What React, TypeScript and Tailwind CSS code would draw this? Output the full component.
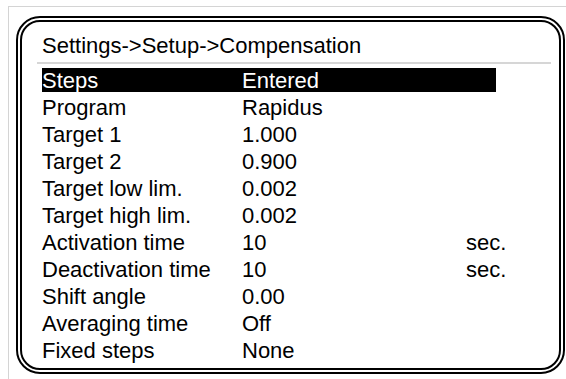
const rows = [
  { label: "Steps", value: "Entered", unit: "" },
  { label: "Program", value: "Rapidus", unit: "" },
  { label: "Target 1", value: "1.000", unit: "" },
  { label: "Target 2", value: "0.900", unit: "" },
  { label: "Target low lim.", value: "0.002", unit: "" },
  { label: "Target high lim.", value: "0.002", unit: "" },
  { label: "Activation time", value: "10", unit: "sec." },
  { label: "Deactivation time", value: "10", unit: "sec." },
  { label: "Shift angle", value: "0.00", unit: "" },
  { label: "Averaging time", value: "Off", unit: "" },
  { label: "Fixed steps", value: "None", unit: "" },
];

export default function App() {
  return (
    <div className="w-[566px] h-[379px] overflow-hidden bg-white pt-[6px] pl-[8px] font-['Liberation_Sans',Arial,sans-serif] text-black">
      <div className="h-[380px] border-t border-l border-[#d4d4d4] pt-[9px] pl-[7px]">
        <div className="w-[549px] h-[358px] rounded-[24px] border-2 border-black p-[2px]">
          <div className="h-full rounded-[20px] border-2 border-black pl-[15px] pr-[8px]">
            <div className="mt-[11px] pl-[5px] text-[22px] leading-[26px]">
              Settings-&gt;Setup-&gt;Compensation
            </div>
            <div className="mt-[3px] h-[2px] bg-[#d6d6d6]" />
            <div className="mt-[4px] pl-[5px] flex flex-col gap-[3.1px]">
              {rows.map((r, i) => (
                <div
                  key={r.label}
                  className={
                    i === 0
                      ? "w-[454px] h-[24px] flex items-center text-[22px] whitespace-nowrap bg-black text-white"
                      : "w-[454px] h-[24px] flex items-center text-[22px] whitespace-nowrap"
                  }
                >
                  <span className="w-[200px] shrink-0">{r.label}</span>
                  <span className="w-[224px] shrink-0">{r.value}</span>
                  <span className="shrink-0">{r.unit}</span>
                </div>
              ))}
            </div>
          </div>
        </div>
      </div>
    </div>
  );
}
